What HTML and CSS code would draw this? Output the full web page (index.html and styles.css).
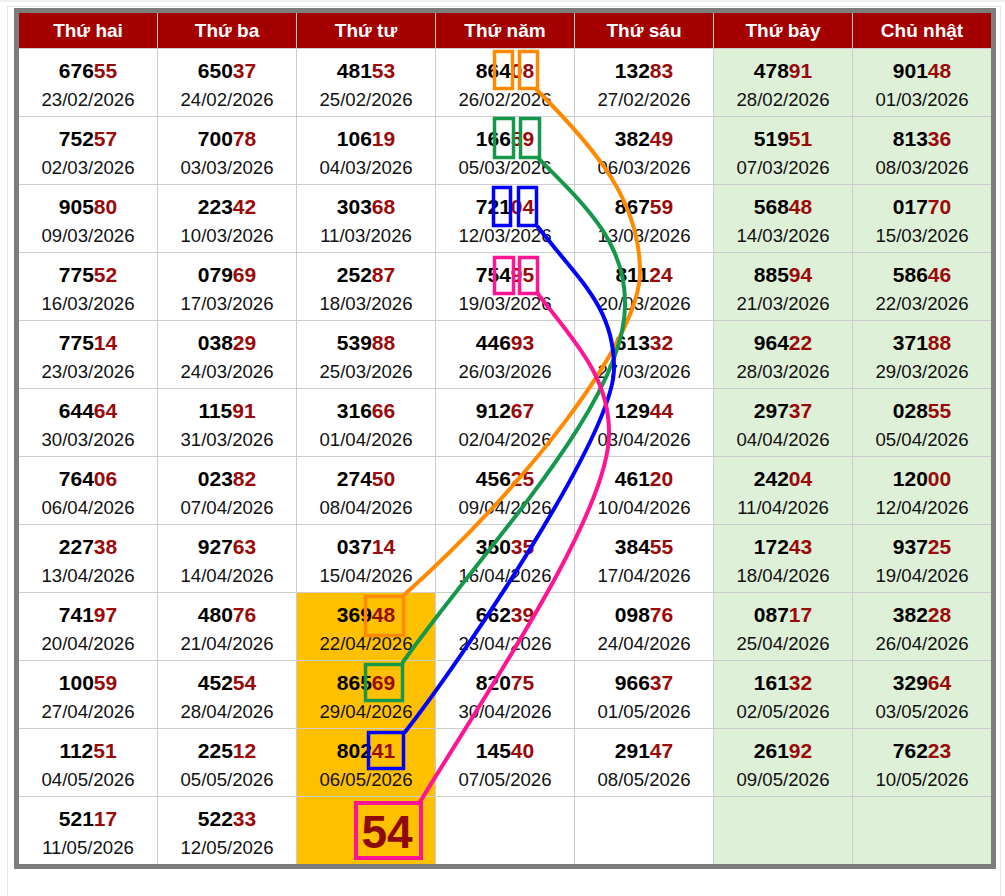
FILE: index.html
```html
<!DOCTYPE html>
<html lang="vi">
<head>
<meta charset="utf-8">
<title>Bảng thống kê</title>
<link rel="stylesheet" href="styles.css">
</head>
<body>
<div class="page">
  <div class="sheet">
    <div class="board">
      <div class="head">Thứ hai</div><div class="head">Thứ ba</div><div class="head">Thứ tư</div><div class="head">Thứ năm</div><div class="head">Thứ sáu</div><div class="head">Thứ bảy</div><div class="head">Chủ nhật</div>

      <div class="cell"><div class="num">676<b>55</b></div><div class="date">23/02/2026</div></div>
      <div class="cell"><div class="num">650<b>37</b></div><div class="date">24/02/2026</div></div>
      <div class="cell"><div class="num">481<b>53</b></div><div class="date">25/02/2026</div></div>
      <div class="cell"><div class="num">864<b>08</b></div><div class="date">26/02/2026</div></div>
      <div class="cell"><div class="num">132<b>83</b></div><div class="date">27/02/2026</div></div>
      <div class="cell wk"><div class="num">478<b>91</b></div><div class="date">28/02/2026</div></div>
      <div class="cell wk"><div class="num">901<b>48</b></div><div class="date">01/03/2026</div></div>

      <div class="cell"><div class="num">752<b>57</b></div><div class="date">02/03/2026</div></div>
      <div class="cell"><div class="num">700<b>78</b></div><div class="date">03/03/2026</div></div>
      <div class="cell"><div class="num">106<b>19</b></div><div class="date">04/03/2026</div></div>
      <div class="cell"><div class="num">166<b>59</b></div><div class="date">05/03/2026</div></div>
      <div class="cell"><div class="num">382<b>49</b></div><div class="date">06/03/2026</div></div>
      <div class="cell wk"><div class="num">519<b>51</b></div><div class="date">07/03/2026</div></div>
      <div class="cell wk"><div class="num">813<b>36</b></div><div class="date">08/03/2026</div></div>

      <div class="cell"><div class="num">905<b>80</b></div><div class="date">09/03/2026</div></div>
      <div class="cell"><div class="num">223<b>42</b></div><div class="date">10/03/2026</div></div>
      <div class="cell"><div class="num">303<b>68</b></div><div class="date">11/03/2026</div></div>
      <div class="cell"><div class="num">721<b>04</b></div><div class="date">12/03/2026</div></div>
      <div class="cell"><div class="num">867<b>59</b></div><div class="date">13/03/2026</div></div>
      <div class="cell wk"><div class="num">568<b>48</b></div><div class="date">14/03/2026</div></div>
      <div class="cell wk"><div class="num">017<b>70</b></div><div class="date">15/03/2026</div></div>

      <div class="cell"><div class="num">775<b>52</b></div><div class="date">16/03/2026</div></div>
      <div class="cell"><div class="num">079<b>69</b></div><div class="date">17/03/2026</div></div>
      <div class="cell"><div class="num">252<b>87</b></div><div class="date">18/03/2026</div></div>
      <div class="cell"><div class="num">754<b>95</b></div><div class="date">19/03/2026</div></div>
      <div class="cell"><div class="num">811<b>24</b></div><div class="date">20/03/2026</div></div>
      <div class="cell wk"><div class="num">885<b>94</b></div><div class="date">21/03/2026</div></div>
      <div class="cell wk"><div class="num">586<b>46</b></div><div class="date">22/03/2026</div></div>

      <div class="cell"><div class="num">775<b>14</b></div><div class="date">23/03/2026</div></div>
      <div class="cell"><div class="num">038<b>29</b></div><div class="date">24/03/2026</div></div>
      <div class="cell"><div class="num">539<b>88</b></div><div class="date">25/03/2026</div></div>
      <div class="cell"><div class="num">446<b>93</b></div><div class="date">26/03/2026</div></div>
      <div class="cell"><div class="num">613<b>32</b></div><div class="date">27/03/2026</div></div>
      <div class="cell wk"><div class="num">964<b>22</b></div><div class="date">28/03/2026</div></div>
      <div class="cell wk"><div class="num">371<b>88</b></div><div class="date">29/03/2026</div></div>

      <div class="cell"><div class="num">644<b>64</b></div><div class="date">30/03/2026</div></div>
      <div class="cell"><div class="num">115<b>91</b></div><div class="date">31/03/2026</div></div>
      <div class="cell"><div class="num">316<b>66</b></div><div class="date">01/04/2026</div></div>
      <div class="cell"><div class="num">912<b>67</b></div><div class="date">02/04/2026</div></div>
      <div class="cell"><div class="num">129<b>44</b></div><div class="date">03/04/2026</div></div>
      <div class="cell wk"><div class="num">297<b>37</b></div><div class="date">04/04/2026</div></div>
      <div class="cell wk"><div class="num">028<b>55</b></div><div class="date">05/04/2026</div></div>

      <div class="cell"><div class="num">764<b>06</b></div><div class="date">06/04/2026</div></div>
      <div class="cell"><div class="num">023<b>82</b></div><div class="date">07/04/2026</div></div>
      <div class="cell"><div class="num">274<b>50</b></div><div class="date">08/04/2026</div></div>
      <div class="cell"><div class="num">456<b>25</b></div><div class="date">09/04/2026</div></div>
      <div class="cell"><div class="num">461<b>20</b></div><div class="date">10/04/2026</div></div>
      <div class="cell wk"><div class="num">242<b>04</b></div><div class="date">11/04/2026</div></div>
      <div class="cell wk"><div class="num">120<b>00</b></div><div class="date">12/04/2026</div></div>

      <div class="cell"><div class="num">227<b>38</b></div><div class="date">13/04/2026</div></div>
      <div class="cell"><div class="num">927<b>63</b></div><div class="date">14/04/2026</div></div>
      <div class="cell"><div class="num">037<b>14</b></div><div class="date">15/04/2026</div></div>
      <div class="cell"><div class="num">350<b>35</b></div><div class="date">16/04/2026</div></div>
      <div class="cell"><div class="num">384<b>55</b></div><div class="date">17/04/2026</div></div>
      <div class="cell wk"><div class="num">172<b>43</b></div><div class="date">18/04/2026</div></div>
      <div class="cell wk"><div class="num">937<b>25</b></div><div class="date">19/04/2026</div></div>

      <div class="cell"><div class="num">741<b>97</b></div><div class="date">20/04/2026</div></div>
      <div class="cell"><div class="num">480<b>76</b></div><div class="date">21/04/2026</div></div>
      <div class="cell hl"><div class="num">369<b>48</b></div><div class="date">22/04/2026</div></div>
      <div class="cell"><div class="num">662<b>39</b></div><div class="date">23/04/2026</div></div>
      <div class="cell"><div class="num">098<b>76</b></div><div class="date">24/04/2026</div></div>
      <div class="cell wk"><div class="num">087<b>17</b></div><div class="date">25/04/2026</div></div>
      <div class="cell wk"><div class="num">382<b>28</b></div><div class="date">26/04/2026</div></div>

      <div class="cell"><div class="num">100<b>59</b></div><div class="date">27/04/2026</div></div>
      <div class="cell"><div class="num">452<b>54</b></div><div class="date">28/04/2026</div></div>
      <div class="cell hl"><div class="num">865<b>69</b></div><div class="date">29/04/2026</div></div>
      <div class="cell"><div class="num">820<b>75</b></div><div class="date">30/04/2026</div></div>
      <div class="cell"><div class="num">966<b>37</b></div><div class="date">01/05/2026</div></div>
      <div class="cell wk"><div class="num">161<b>32</b></div><div class="date">02/05/2026</div></div>
      <div class="cell wk"><div class="num">329<b>64</b></div><div class="date">03/05/2026</div></div>

      <div class="cell"><div class="num">112<b>51</b></div><div class="date">04/05/2026</div></div>
      <div class="cell"><div class="num">225<b>12</b></div><div class="date">05/05/2026</div></div>
      <div class="cell hl"><div class="num">802<b>41</b></div><div class="date">06/05/2026</div></div>
      <div class="cell"><div class="num">145<b>40</b></div><div class="date">07/05/2026</div></div>
      <div class="cell"><div class="num">291<b>47</b></div><div class="date">08/05/2026</div></div>
      <div class="cell wk"><div class="num">261<b>92</b></div><div class="date">09/05/2026</div></div>
      <div class="cell wk"><div class="num">762<b>23</b></div><div class="date">10/05/2026</div></div>

      <div class="cell"><div class="num">521<b>17</b></div><div class="date">11/05/2026</div></div>
      <div class="cell"><div class="num">522<b>33</b></div><div class="date">12/05/2026</div></div>
      <div class="cell hl pred"><div class="big">54</div></div>
      <div class="cell"></div>
      <div class="cell"></div>
      <div class="cell wk"></div>
      <div class="cell wk"></div>
    </div>
  </div>

  <svg class="links" width="1005" height="896" viewBox="0 0 1005 896">
    <g fill="none" stroke-width="3.5">
      <g stroke="#ff8a00">
        <rect x="494.5" y="49.5" width="18" height="37"/>
        <rect x="519.5" y="49.5" width="18" height="37"/>
        <rect x="365.5" y="594.5" width="38" height="39"/>
      </g>
      <g stroke="#16984c">
        <rect x="494.5" y="116.5" width="19" height="39"/>
        <rect x="520.5" y="116.5" width="19" height="39"/>
        <rect x="365.5" y="662.5" width="37" height="36"/>
      </g>
      <g stroke="#0000ff">
        <rect x="493.5" y="185.5" width="17" height="38"/>
        <rect x="518.5" y="185.5" width="18" height="38"/>
        <rect x="368.5" y="730.5" width="35" height="36"/>
      </g>
      <g stroke="#ff1493">
        <rect x="494.5" y="255.5" width="19" height="36"/>
        <rect x="519.5" y="255.5" width="18" height="36"/>
      </g>
      <rect x="356" y="801" width="65" height="55" stroke="#ff1493" stroke-width="4"/>
    </g>
    <g fill="none" stroke-width="4" stroke-linecap="round">
      <path stroke="#ff8a00" d="M537 88 C597 148 640 200 640 270 C640 340 520 490 404 593"/>
      <path stroke="#16984c" d="M539 157 C584 202 625 240 625 300 C628 400 480 550 403 660"/>
      <path stroke="#0000ff" d="M538 225 C578 277 614 305 614 365 C616 430 460 660 405 730"/>
      <path stroke="#ff1493" d="M538 292 C575 340 609 375 609 430 C611 510 480 700 420 800"/>
    </g>
  </svg>
</div>
</body>
</html>
```

FILE: styles.css
```css
* {
  box-sizing: border-box;
}

body {
  margin: 0;
  background: #ffffff;
  font-family: "Liberation Sans", Arial, sans-serif;
}

.page {
  position: relative;
  width: 1005px;
  height: 896px;
  border-top: 2px solid #efefef;
  padding-top: 4px;
  overflow: hidden;
}

.sheet {
  margin-left: 7px;
  width: 994px;
  height: 890px;
  border-left: 1px solid #e4e4e4;
  border-right: 1px solid #e4e4e4;
  border-top: 1px solid #e4e4e4;
  padding: 1px 0 0 6px;
}

.board {
  width: 982px;
  border: 5px solid #7d7d7d;
  display: grid;
  grid-template-columns: repeat(7, 1fr);
  grid-template-rows: 35px repeat(12, 67px);
  gap: 1px;
  background: #cdcdcd;
}

.head {
  background: #a50000;
  color: #ffffff;
  font-weight: bold;
  font-size: 19px;
  display: flex;
  align-items: center;
  justify-content: center;
}

.cell {
  background: #ffffff;
  text-align: center;
  padding-top: 8px;
  color: #111111;
}

.cell.wk {
  background: #dff0d8;
}

.cell.hl {
  background: #ffc000;
}

.num {
  font-size: 21px;
  font-weight: bold;
  line-height: 28px;
  color: #000000;
}

.num b {
  color: #9a0a0a;
}

.date {
  font-size: 18.6px;
  line-height: 30px;
}

.cell.pred {
  padding-top: 2px;
  display: flex;
  align-items: center;
  justify-content: center;
}

.big {
  margin-left: 42px;
  font-size: 46px;
  font-weight: bold;
  line-height: 1;
  color: #8e0a0a;
}

.links {
  position: absolute;
  left: 0;
  top: 0;
  pointer-events: none;
}
```
